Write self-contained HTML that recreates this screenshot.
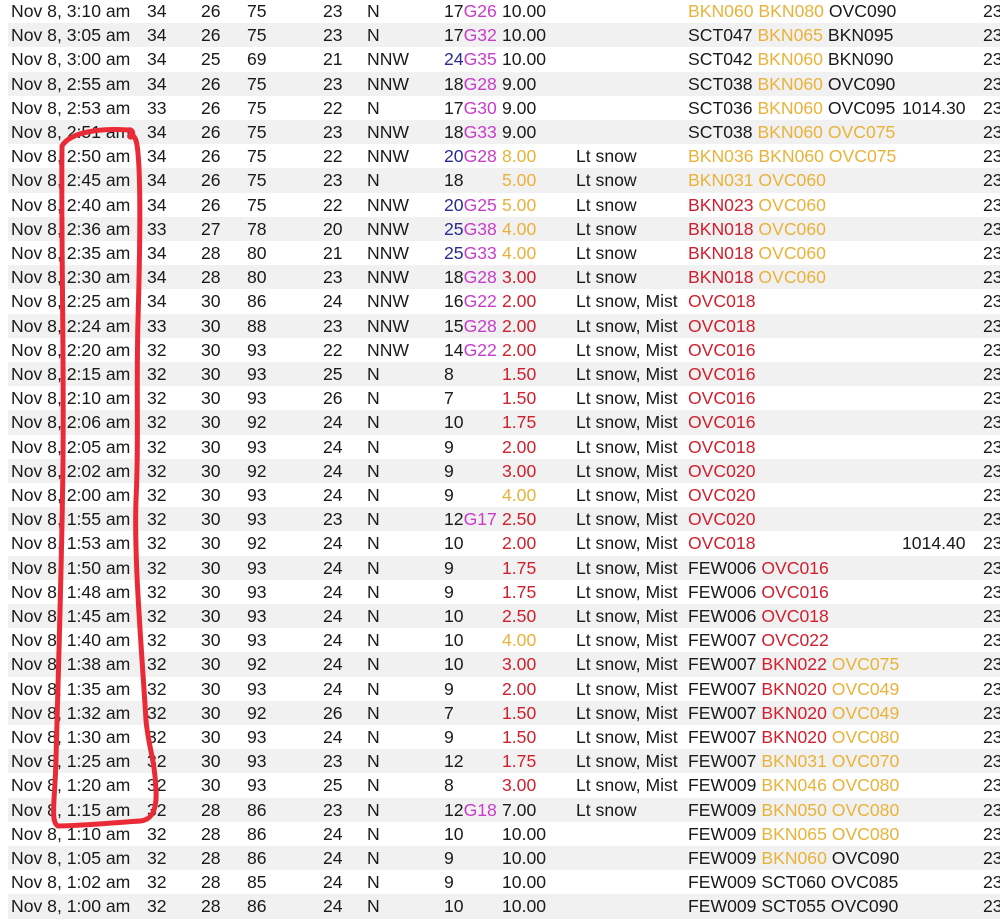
<!DOCTYPE html>
<html><head><meta charset="utf-8"><style>
body{margin:0;width:1000px;height:921px;overflow:hidden;background:#fff;font-family:"Liberation Sans",sans-serif;font-size:17.6px;color:#1a1a1a;position:relative}
.r{position:absolute;left:0;width:1000px;height:24.2px;line-height:24.2px;white-space:nowrap}
.g{background:linear-gradient(90deg,#fff 8px,#f1f1f1 8px)}
.r span{position:absolute;top:0}
.a{left:11px}.b{left:147px}.c{left:201px}.d{left:247px}.e{left:323px}.f{left:367px}.h{left:444px}.i{left:502px}.j{left:576px}.k{left:688px}.l{left:902px}.m{left:983px}
i{font-style:normal}
.O{color:#e9b23a}.R{color:#d0202e}.M{color:#c83ccc}.B{color:#2b2b92}
</style></head><body>
<div class="r" style="top:-1px"><span class="a">Nov 8, 3:10 am</span><span class="b">34</span><span class="c">26</span><span class="d">75</span><span class="e">23</span><span class="f">N</span><span class="h">17<i class="M">G26</i></span><span class="i">10.00</span><span class="k"><i class="O">BKN060 BKN080</i> OVC090</span><span class="m">23</span></div>
<div class="r g" style="top:23.2px"><span class="a">Nov 8, 3:05 am</span><span class="b">34</span><span class="c">26</span><span class="d">75</span><span class="e">23</span><span class="f">N</span><span class="h">17<i class="M">G32</i></span><span class="i">10.00</span><span class="k">SCT047 <i class="O">BKN065</i> BKN095</span><span class="m">23</span></div>
<div class="r" style="top:47.4px"><span class="a">Nov 8, 3:00 am</span><span class="b">34</span><span class="c">25</span><span class="d">69</span><span class="e">21</span><span class="f">NNW</span><span class="h"><i class="B">24</i><i class="M">G35</i></span><span class="i">10.00</span><span class="k">SCT042 <i class="O">BKN060</i> BKN090</span><span class="m">23</span></div>
<div class="r g" style="top:71.6px"><span class="a">Nov 8, 2:55 am</span><span class="b">34</span><span class="c">26</span><span class="d">75</span><span class="e">23</span><span class="f">NNW</span><span class="h">18<i class="M">G28</i></span><span class="i">9.00</span><span class="k">SCT038 <i class="O">BKN060</i> OVC090</span><span class="m">23</span></div>
<div class="r" style="top:95.8px"><span class="a">Nov 8, 2:53 am</span><span class="b">33</span><span class="c">26</span><span class="d">75</span><span class="e">22</span><span class="f">N</span><span class="h">17<i class="M">G30</i></span><span class="i">9.00</span><span class="k">SCT036 <i class="O">BKN060</i> OVC095</span><span class="l">1014.30</span><span class="m">23</span></div>
<div class="r g" style="top:120px"><span class="a">Nov 8, 2:51 am</span><span class="b">34</span><span class="c">26</span><span class="d">75</span><span class="e">23</span><span class="f">NNW</span><span class="h">18<i class="M">G33</i></span><span class="i">9.00</span><span class="k">SCT038 <i class="O">BKN060 OVC075</i></span><span class="m">23</span></div>
<div class="r" style="top:144.2px"><span class="a">Nov 8, 2:50 am</span><span class="b">34</span><span class="c">26</span><span class="d">75</span><span class="e">22</span><span class="f">NNW</span><span class="h"><i class="B">20</i><i class="M">G28</i></span><span class="i O">8.00</span><span class="j">Lt snow</span><span class="k O">BKN036 BKN060 OVC075</span><span class="m">23</span></div>
<div class="r g" style="top:168.4px"><span class="a">Nov 8, 2:45 am</span><span class="b">34</span><span class="c">26</span><span class="d">75</span><span class="e">23</span><span class="f">N</span><span class="h">18</span><span class="i O">5.00</span><span class="j">Lt snow</span><span class="k O">BKN031 OVC060</span><span class="m">23</span></div>
<div class="r" style="top:192.6px"><span class="a">Nov 8, 2:40 am</span><span class="b">34</span><span class="c">26</span><span class="d">75</span><span class="e">22</span><span class="f">NNW</span><span class="h"><i class="B">20</i><i class="M">G25</i></span><span class="i O">5.00</span><span class="j">Lt snow</span><span class="k"><i class="R">BKN023</i> <i class="O">OVC060</i></span><span class="m">23</span></div>
<div class="r g" style="top:216.8px"><span class="a">Nov 8, 2:36 am</span><span class="b">33</span><span class="c">27</span><span class="d">78</span><span class="e">20</span><span class="f">NNW</span><span class="h"><i class="B">25</i><i class="M">G38</i></span><span class="i O">4.00</span><span class="j">Lt snow</span><span class="k"><i class="R">BKN018</i> <i class="O">OVC060</i></span><span class="m">23</span></div>
<div class="r" style="top:241px"><span class="a">Nov 8, 2:35 am</span><span class="b">34</span><span class="c">28</span><span class="d">80</span><span class="e">21</span><span class="f">NNW</span><span class="h"><i class="B">25</i><i class="M">G33</i></span><span class="i O">4.00</span><span class="j">Lt snow</span><span class="k"><i class="R">BKN018</i> <i class="O">OVC060</i></span><span class="m">23</span></div>
<div class="r g" style="top:265.2px"><span class="a">Nov 8, 2:30 am</span><span class="b">34</span><span class="c">28</span><span class="d">80</span><span class="e">23</span><span class="f">NNW</span><span class="h">18<i class="M">G28</i></span><span class="i R">3.00</span><span class="j">Lt snow</span><span class="k"><i class="R">BKN018</i> <i class="O">OVC060</i></span><span class="m">23</span></div>
<div class="r" style="top:289.4px"><span class="a">Nov 8, 2:25 am</span><span class="b">34</span><span class="c">30</span><span class="d">86</span><span class="e">24</span><span class="f">NNW</span><span class="h">16<i class="M">G22</i></span><span class="i R">2.00</span><span class="j">Lt snow, Mist</span><span class="k R">OVC018</span><span class="m">23</span></div>
<div class="r g" style="top:313.6px"><span class="a">Nov 8, 2:24 am</span><span class="b">33</span><span class="c">30</span><span class="d">88</span><span class="e">23</span><span class="f">NNW</span><span class="h">15<i class="M">G28</i></span><span class="i R">2.00</span><span class="j">Lt snow, Mist</span><span class="k R">OVC018</span><span class="m">23</span></div>
<div class="r" style="top:337.8px"><span class="a">Nov 8, 2:20 am</span><span class="b">32</span><span class="c">30</span><span class="d">93</span><span class="e">22</span><span class="f">NNW</span><span class="h">14<i class="M">G22</i></span><span class="i R">2.00</span><span class="j">Lt snow, Mist</span><span class="k R">OVC016</span><span class="m">23</span></div>
<div class="r g" style="top:362px"><span class="a">Nov 8, 2:15 am</span><span class="b">32</span><span class="c">30</span><span class="d">93</span><span class="e">25</span><span class="f">N</span><span class="h">8</span><span class="i R">1.50</span><span class="j">Lt snow, Mist</span><span class="k R">OVC016</span><span class="m">23</span></div>
<div class="r" style="top:386.2px"><span class="a">Nov 8, 2:10 am</span><span class="b">32</span><span class="c">30</span><span class="d">93</span><span class="e">26</span><span class="f">N</span><span class="h">7</span><span class="i R">1.50</span><span class="j">Lt snow, Mist</span><span class="k R">OVC016</span><span class="m">23</span></div>
<div class="r g" style="top:410.4px"><span class="a">Nov 8, 2:06 am</span><span class="b">32</span><span class="c">30</span><span class="d">92</span><span class="e">24</span><span class="f">N</span><span class="h">10</span><span class="i R">1.75</span><span class="j">Lt snow, Mist</span><span class="k R">OVC016</span><span class="m">23</span></div>
<div class="r" style="top:434.6px"><span class="a">Nov 8, 2:05 am</span><span class="b">32</span><span class="c">30</span><span class="d">93</span><span class="e">24</span><span class="f">N</span><span class="h">9</span><span class="i R">2.00</span><span class="j">Lt snow, Mist</span><span class="k R">OVC018</span><span class="m">23</span></div>
<div class="r g" style="top:458.8px"><span class="a">Nov 8, 2:02 am</span><span class="b">32</span><span class="c">30</span><span class="d">92</span><span class="e">24</span><span class="f">N</span><span class="h">9</span><span class="i R">3.00</span><span class="j">Lt snow, Mist</span><span class="k R">OVC020</span><span class="m">23</span></div>
<div class="r" style="top:483px"><span class="a">Nov 8, 2:00 am</span><span class="b">32</span><span class="c">30</span><span class="d">93</span><span class="e">24</span><span class="f">N</span><span class="h">9</span><span class="i O">4.00</span><span class="j">Lt snow, Mist</span><span class="k R">OVC020</span><span class="m">23</span></div>
<div class="r g" style="top:507.2px"><span class="a">Nov 8, 1:55 am</span><span class="b">32</span><span class="c">30</span><span class="d">93</span><span class="e">23</span><span class="f">N</span><span class="h">12<i class="M">G17</i></span><span class="i R">2.50</span><span class="j">Lt snow, Mist</span><span class="k R">OVC020</span><span class="m">23</span></div>
<div class="r" style="top:531.4px"><span class="a">Nov 8, 1:53 am</span><span class="b">32</span><span class="c">30</span><span class="d">92</span><span class="e">24</span><span class="f">N</span><span class="h">10</span><span class="i R">2.00</span><span class="j">Lt snow, Mist</span><span class="k R">OVC018</span><span class="l">1014.40</span><span class="m">23</span></div>
<div class="r g" style="top:555.6px"><span class="a">Nov 8, 1:50 am</span><span class="b">32</span><span class="c">30</span><span class="d">93</span><span class="e">24</span><span class="f">N</span><span class="h">9</span><span class="i R">1.75</span><span class="j">Lt snow, Mist</span><span class="k">FEW006 <i class="R">OVC016</i></span><span class="m">23</span></div>
<div class="r" style="top:579.8px"><span class="a">Nov 8, 1:48 am</span><span class="b">32</span><span class="c">30</span><span class="d">93</span><span class="e">24</span><span class="f">N</span><span class="h">9</span><span class="i R">1.75</span><span class="j">Lt snow, Mist</span><span class="k">FEW006 <i class="R">OVC016</i></span><span class="m">23</span></div>
<div class="r g" style="top:604px"><span class="a">Nov 8, 1:45 am</span><span class="b">32</span><span class="c">30</span><span class="d">93</span><span class="e">24</span><span class="f">N</span><span class="h">10</span><span class="i R">2.50</span><span class="j">Lt snow, Mist</span><span class="k">FEW006 <i class="R">OVC018</i></span><span class="m">23</span></div>
<div class="r" style="top:628.2px"><span class="a">Nov 8, 1:40 am</span><span class="b">32</span><span class="c">30</span><span class="d">93</span><span class="e">24</span><span class="f">N</span><span class="h">10</span><span class="i O">4.00</span><span class="j">Lt snow, Mist</span><span class="k">FEW007 <i class="R">OVC022</i></span><span class="m">23</span></div>
<div class="r g" style="top:652.4px"><span class="a">Nov 8, 1:38 am</span><span class="b">32</span><span class="c">30</span><span class="d">92</span><span class="e">24</span><span class="f">N</span><span class="h">10</span><span class="i R">3.00</span><span class="j">Lt snow, Mist</span><span class="k">FEW007 <i class="R">BKN022</i> <i class="O">OVC075</i></span><span class="m">23</span></div>
<div class="r" style="top:676.6px"><span class="a">Nov 8, 1:35 am</span><span class="b">32</span><span class="c">30</span><span class="d">93</span><span class="e">24</span><span class="f">N</span><span class="h">9</span><span class="i R">2.00</span><span class="j">Lt snow, Mist</span><span class="k">FEW007 <i class="R">BKN020</i> <i class="O">OVC049</i></span><span class="m">23</span></div>
<div class="r g" style="top:700.8px"><span class="a">Nov 8, 1:32 am</span><span class="b">32</span><span class="c">30</span><span class="d">92</span><span class="e">26</span><span class="f">N</span><span class="h">7</span><span class="i R">1.50</span><span class="j">Lt snow, Mist</span><span class="k">FEW007 <i class="R">BKN020</i> <i class="O">OVC049</i></span><span class="m">23</span></div>
<div class="r" style="top:725px"><span class="a">Nov 8, 1:30 am</span><span class="b">32</span><span class="c">30</span><span class="d">93</span><span class="e">24</span><span class="f">N</span><span class="h">9</span><span class="i R">1.50</span><span class="j">Lt snow, Mist</span><span class="k">FEW007 <i class="R">BKN020</i> <i class="O">OVC080</i></span><span class="m">23</span></div>
<div class="r g" style="top:749.2px"><span class="a">Nov 8, 1:25 am</span><span class="b">32</span><span class="c">30</span><span class="d">93</span><span class="e">23</span><span class="f">N</span><span class="h">12</span><span class="i R">1.75</span><span class="j">Lt snow, Mist</span><span class="k">FEW007 <i class="O">BKN031 OVC070</i></span><span class="m">23</span></div>
<div class="r" style="top:773.4px"><span class="a">Nov 8, 1:20 am</span><span class="b">32</span><span class="c">30</span><span class="d">93</span><span class="e">25</span><span class="f">N</span><span class="h">8</span><span class="i R">3.00</span><span class="j">Lt snow, Mist</span><span class="k">FEW009 <i class="O">BKN046 OVC080</i></span><span class="m">23</span></div>
<div class="r g" style="top:797.6px"><span class="a">Nov 8, 1:15 am</span><span class="b">32</span><span class="c">28</span><span class="d">86</span><span class="e">23</span><span class="f">N</span><span class="h">12<i class="M">G18</i></span><span class="i">7.00</span><span class="j">Lt snow</span><span class="k">FEW009 <i class="O">BKN050 OVC080</i></span><span class="m">23</span></div>
<div class="r" style="top:821.8px"><span class="a">Nov 8, 1:10 am</span><span class="b">32</span><span class="c">28</span><span class="d">86</span><span class="e">24</span><span class="f">N</span><span class="h">10</span><span class="i">10.00</span><span class="k">FEW009 <i class="O">BKN065 OVC080</i></span><span class="m">23</span></div>
<div class="r g" style="top:846px"><span class="a">Nov 8, 1:05 am</span><span class="b">32</span><span class="c">28</span><span class="d">86</span><span class="e">24</span><span class="f">N</span><span class="h">9</span><span class="i">10.00</span><span class="k">FEW009 <i class="O">BKN060</i> OVC090</span><span class="m">23</span></div>
<div class="r" style="top:870.2px"><span class="a">Nov 8, 1:02 am</span><span class="b">32</span><span class="c">28</span><span class="d">85</span><span class="e">24</span><span class="f">N</span><span class="h">9</span><span class="i">10.00</span><span class="k">FEW009 SCT060 OVC085</span><span class="m">23</span></div>
<div class="r g" style="top:894.4px"><span class="a">Nov 8, 1:00 am</span><span class="b">32</span><span class="c">28</span><span class="d">86</span><span class="e">24</span><span class="f">N</span><span class="h">10</span><span class="i">10.00</span><span class="k">FEW009 SCT055 OVC090</span><span class="m">23</span></div>
<svg style="position:absolute;left:0;top:0" width="1000" height="921" viewBox="0 0 1000 921">
<path d="M62 146 C70 132 100 128 128 130 C134 128 134 138 130 137 C128 134 135 132 137 145 C141 170 140 250 138 320 C136 400 139 440 136 500 C134 560 141 640 146 720 C148 745 155 760 156 790 C157 810 152 820 140 821 C110 823 80 826 58 826 C50 822 55 800 56 760 C58 680 62 560 63 460 C64 340 61 240 62 146 Z" fill="none" stroke="#ea2b37" stroke-width="5" stroke-linejoin="round" stroke-linecap="round"/>
</svg>
</body></html>
